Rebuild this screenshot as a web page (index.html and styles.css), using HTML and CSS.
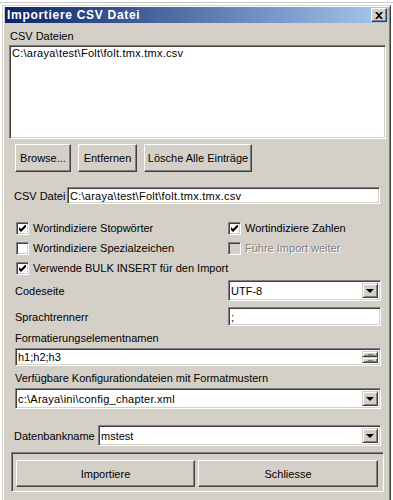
FILE: index.html
```html
<!DOCTYPE html>
<html lang="de">
<head>
<meta charset="UTF-8">
<meta name="viewport" content="width=device-width, initial-scale=1.0">
<title>Importiere CSV Datei</title>
<link rel="stylesheet" href="styles.css">
</head>
<body>
  <div class="window">
    <div class="titlebar">
      <span class="title">Importiere CSV Datei</span>
      <span class="close">
        <svg width="8" height="7" viewBox="0 0 8 7"><path d="M0 0h2l2 2 2-2h2l-3 3.5 3 3.5h-2l-2-2-2 2h-2l3-3.5z" fill="#000"/></svg>
      </span>
    </div>

    <div class="client">
      <div class="caption">CSV Dateien</div>
      <div class="listbox sunken">
        <div class="list-item path">C:\araya\test\Folt\folt.tmx.tmx.csv</div>
      </div>

      <div class="btn-row">
        <span class="btn btn-browse">Browse...</span>
        <span class="btn btn-remove">Entfernen</span>
        <span class="btn btn-clear">Lösche Alle Einträge</span>
      </div>

      <div class="file-row">
        <span class="file-label">CSV Datei</span>
        <span class="edit sunken file-edit path">C:\araya\test\Folt\folt.tmx.tmx.csv</span>
      </div>

      <div class="checks">
        <label class="check"><span class="box sunken"><svg width="7" height="7" viewBox="0 0 7 7"><path d="M0 2l2 2 5-5v3l-5 5-2-2z" fill="#000"/></svg></span>Wortindiziere Stopwörter</label>
        <label class="check"><span class="box sunken"><svg width="7" height="7" viewBox="0 0 7 7"><path d="M0 2l2 2 5-5v3l-5 5-2-2z" fill="#000"/></svg></span>Wortindiziere Zahlen</label>
        <label class="check"><span class="box sunken"></span>Wortindiziere Spezialzeichen</label>
        <label class="check disabled"><span class="box sunken"></span>Führe Import weiter</label>
        <label class="check wide"><span class="box sunken"><svg width="7" height="7" viewBox="0 0 7 7"><path d="M0 2l2 2 5-5v3l-5 5-2-2z" fill="#000"/></svg></span>Verwende BULK INSERT für den Import</label>
      </div>

      <div class="field-row row-code">
        <span class="field-label">Codeseite</span>
        <span class="combo sunken half">
          <span class="combo-text">UTF-8</span>
          <span class="drop"><span class="arrow"></span></span>
        </span>
      </div>

      <div class="field-row row-sep">
        <span class="field-label">Sprachtrennerr</span>
        <span class="edit sunken half">;</span>
      </div>

      <div class="caption caption-format">Formatierungselementnamen</div>
      <div class="combo sunken full spin-edit">
        <span class="combo-text">h1;h2;h3</span>
        <span class="spin">
          <span class="spin-btn"><span class="tick"></span></span>
          <span class="spin-btn"><span class="tick"></span></span>
        </span>
      </div>

      <div class="caption caption-config">Verfügbare Konfigurationdateien mit Formatmustern</div>
      <div class="combo sunken full config-combo">
        <span class="combo-text path">c:\Araya\ini\config_chapter.xml</span>
        <span class="drop"><span class="arrow"></span></span>
      </div>

      <div class="field-row row-db">
        <span class="db-label">Datenbankname</span>
        <span class="combo sunken db-combo">
          <span class="combo-text">mstest</span>
          <span class="drop"><span class="arrow"></span></span>
        </span>
      </div>

      <div class="group">
        <span class="btn btn-import">Importiere</span>
        <span class="btn btn-close">Schliesse</span>
      </div>
    </div>
  </div>
</body>
</html>
```

FILE: styles.css
```css
* {
  box-sizing: border-box;
}
body {
  margin: 0;
  width: 393px;
  height: 500px;
  overflow: hidden;
  background: #fff;
  font-family: "Liberation Sans", Arial, sans-serif;
  font-size: 11px;
  color: #000;
  border-top: 1px solid #fff;
}
body::before {
  content: "";
  display: block;
  height: 1px;
  background: #c8c8c8;
  margin-top: 1px;
}
.window {
  margin: 2px 0 0 2px;
  width: 389px;
  height: 520px;
  background: #d4d0c8;
  border: 1px solid;
  border-color: #d4d0c8 #404040 #404040 #d4d0c8;
  box-shadow: inset 1px 1px #fff, inset -1px -1px #808080;
  padding: 1px 1px 0 2px;
}
.titlebar {
  height: 16px;
  display: flex;
  align-items: center;
  justify-content: space-between;
  background: linear-gradient(to right, #0a246a, #a6caf0);
  padding: 0 2px 0 2px;
}
.title {
  color: #fff;
  font-weight: bold;
  font-size: 12px;
  line-height: 16px;
  letter-spacing: 0.7px;
}
.close {
  width: 16px;
  height: 14px;
  display: flex;
  align-items: center;
  justify-content: center;
  background: #d4d0c8;
  border: 1px solid;
  border-color: #fff #404040 #404040 #fff;
  box-shadow: inset -1px -1px #808080;
}
.client {
  display: flex;
  flex-direction: column;
  align-items: flex-start;
}
.path {
  letter-spacing: 0.25px;
}
.sunken {
  background: #fff;
  border: 1px solid;
  border-color: #808080 #fff #fff #808080;
  box-shadow: inset 1px 1px #404040, inset -1px -1px #d4d0c8;
}
.caption {
  margin: 7px 0 0 5px;
  line-height: 13px;
}
.listbox {
  margin: 2px 0 0 4px;
  width: 377px;
  height: 94px;
  padding: 1px 2px;
}
.list-item {
  line-height: 13px;
}
.btn {
  display: flex;
  align-items: center;
  justify-content: center;
  background: #d4d0c8;
  border: 1px solid;
  border-color: #fff #404040 #404040 #fff;
  box-shadow: inset -1px -1px #808080;
  white-space: nowrap;
}
.btn-row {
  display: flex;
  gap: 7px;
  margin: 5px 0 0 10px;
  height: 28px;
}
.btn-browse { width: 56px; }
.btn-remove { width: 59px; }
.btn-clear { width: 108px; }
.file-row {
  display: flex;
  align-items: center;
  margin: 15px 0 0 9px;
}
.file-label,
.field-label,
.db-label {
  white-space: nowrap;
}
.file-label {
  flex: none;
  width: 53px;
}
.edit {
  display: flex;
  align-items: center;
  padding: 0 2px;
  white-space: nowrap;
  flex: none;
}
.file-edit {
  width: 313px;
  height: 17px;
}
.checks {
  display: grid;
  grid-template-columns: 212px 150px;
  grid-auto-rows: 20px;
  margin: 14px 0 0 11px;
}
.check {
  display: flex;
  align-items: center;
  gap: 4px;
  white-space: nowrap;
}
.check.wide {
  grid-column: 1 / 3;
}
.box {
  width: 13px;
  height: 13px;
  display: flex;
  align-items: center;
  justify-content: center;
  flex: none;
}
.check.disabled {
  color: #808080;
  text-shadow: 1px 1px 0 #fff;
}
.check.disabled .box {
  background: #d4d0c8;
}
.field-row {
  display: flex;
  align-items: center;
  width: 366px;
  margin-left: 10px;
}
.field-label {
  flex: 1;
}
.row-code {
  margin-top: 2px;
}
.row-sep {
  margin-top: 6px;
}
.half {
  width: 153px;
  flex: none;
}
.row-code .combo {
  height: 21px;
}
.row-sep .edit {
  height: 19px;
}
.combo {
  display: flex;
  align-items: stretch;
  padding: 2px;
}
.combo-text {
  flex: 1;
  display: flex;
  align-items: center;
  white-space: nowrap;
}
.drop {
  width: 16px;
  display: flex;
  align-items: center;
  justify-content: center;
  background: #d4d0c8;
  border: 1px solid;
  border-color: #d4d0c8 #404040 #404040 #d4d0c8;
  box-shadow: inset 1px 1px #fff, inset -1px -1px #808080;
}
.arrow {
  width: 0;
  height: 0;
  border-left: 4px solid transparent;
  border-right: 4px solid transparent;
  border-top: 4px solid #000;
  margin-top: 1px;
}
.caption-format {
  margin: 6px 0 0 10px;
}
.caption-config {
  margin: 6px 0 0 10px;
}
.full {
  width: 366px;
  margin-left: 10px;
}
.spin-edit {
  height: 18px;
  margin-top: 3px;
}
.spin {
  width: 16px;
  display: flex;
  flex-direction: column;
}
.spin-btn {
  flex: 1;
  display: flex;
  align-items: center;
  justify-content: center;
  background: #d4d0c8;
  border: 1px solid;
  border-color: #d4d0c8 #404040 #404040 #d4d0c8;
  box-shadow: inset 1px 1px #fff, inset -1px -1px #808080;
}
.tick {
  width: 5px;
  height: 1px;
  background: #808080;
}
.config-combo {
  height: 21px;
  margin-top: 3px;
}
.row-db {
  margin: 16px 0 0 9px;
  width: 372px;
}
.db-label {
  flex: none;
  width: 84px;
}
.db-combo {
  flex: none;
  width: 283px;
  height: 21px;
}
.group {
  display: flex;
  gap: 3px;
  width: 373px;
  height: 40px;
  margin: 6px 0 0 6px;
  padding: 7px 3px 4px 4px;
  border: 1px solid;
  border-color: #808080 #fff #fff #808080;
  box-shadow: inset 1px 1px #404040, inset -1px -1px #d4d0c8;
}
.btn-import { width: 179px; }
.btn-close { width: 180px; }
```
